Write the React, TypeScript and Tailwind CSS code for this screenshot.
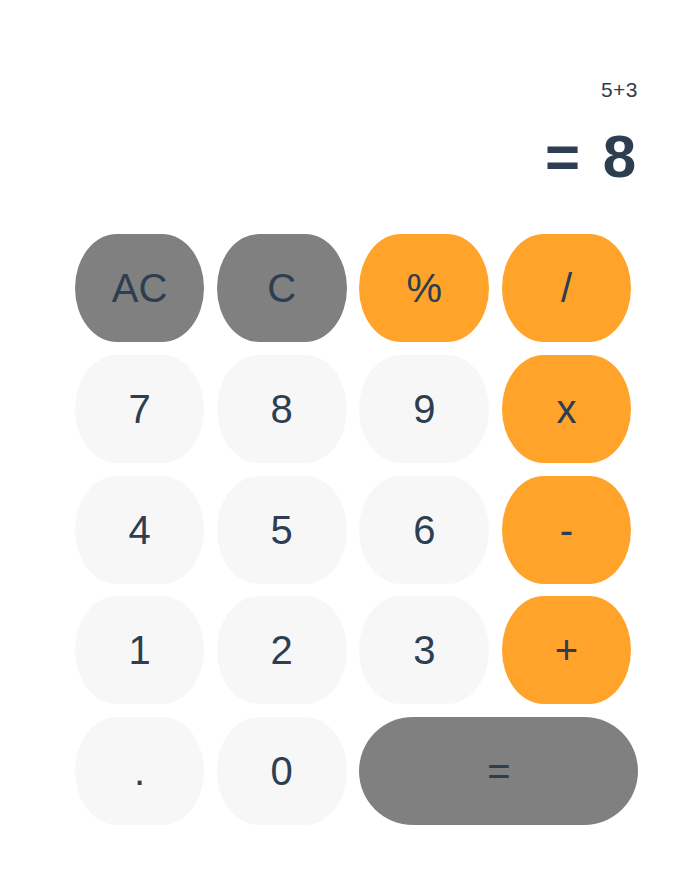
import React from "react";

type B = { label: string; kind: "gray" | "orange" | "light"; wide?: boolean };

const buttons: B[] = [
  { label: "AC", kind: "gray" },
  { label: "C", kind: "gray" },
  { label: "%", kind: "orange" },
  { label: "/", kind: "orange" },
  { label: "7", kind: "light" },
  { label: "8", kind: "light" },
  { label: "9", kind: "light" },
  { label: "x", kind: "orange" },
  { label: "4", kind: "light" },
  { label: "5", kind: "light" },
  { label: "6", kind: "light" },
  { label: "-", kind: "orange" },
  { label: "1", kind: "light" },
  { label: "2", kind: "light" },
  { label: "3", kind: "light" },
  { label: "+", kind: "orange" },
  { label: ".", kind: "light" },
  { label: "0", kind: "light" },
  { label: "=", kind: "gray", wide: true },
];

export default function App() {
  return (
    <div
      className="w-[680px] h-[872px] bg-white text-[#2c3e50]"
      style={{ fontFamily: '"Liberation Sans", Arial, sans-serif' }}
    >
      <div className="pl-[75px] pr-[42px] pt-[76px]">
        <div className="flex flex-col items-end">
          <div className="text-[21px] leading-[28px] h-[28px] tracking-[0.5px]">5+3</div>
          <div className="text-[60px] font-bold leading-[64px] mt-[21px] mr-[2px] [word-spacing:6px]">= 8</div>
        </div>
        <div className="grid grid-cols-[129px_130px_130px_129px] gap-x-[12.67px] gap-y-[12.75px] mt-[45px]">
          {buttons.map((b) => {
            const bg =
              b.kind === "gray"
                ? "bg-[#808080]"
                : b.kind === "orange"
                ? "bg-[#ffa32b]"
                : "bg-[#f7f7f7]";
            return (
              <div
                key={b.label}
                className={
                  b.wide
                    ? `col-span-2 w-[279px] h-[108px] rounded-full flex items-center justify-center text-[40px] ${bg}`
                    : `h-[108px] rounded-[42px_/_54px] flex items-center justify-center text-[40px] ${bg}`
                }
              >
                {b.label}
              </div>
            );
          })}
        </div>
      </div>
    </div>
  );
}
